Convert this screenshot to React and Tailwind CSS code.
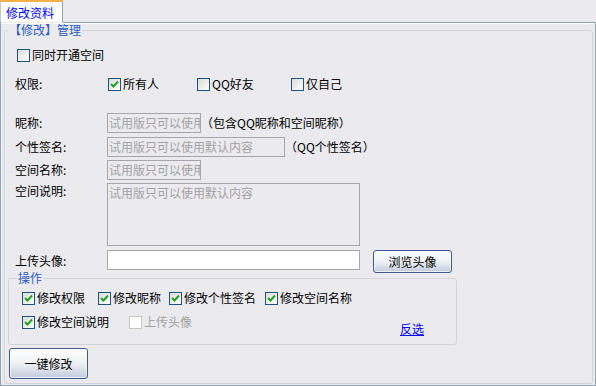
import React from 'react';

const font = { fontFamily: '"Noto Sans CJK SC", "Liberation Sans", sans-serif' };

function Check({ checked, disabled }) {
  if (disabled) {
    return <span className="w-[13px] h-[13px] shrink-0 border border-[#c9c7ba] bg-white" />;
  }
  return (
    <span className="w-[13px] h-[13px] shrink-0 border border-[#1c5180] bg-gradient-to-br from-[#dcdcd7] to-white flex items-center justify-center">
      {checked && (
        <svg width="9" height="9" viewBox="0 0 9 9">
          <path d="M1 4 L3.5 6.5 L8 1.5" fill="none" stroke="#21a121" strokeWidth="2" />
        </svg>
      )}
    </span>
  );
}

function Item({ label, checked, disabled, width }) {
  return (
    <div className="flex items-center gap-[2px] shrink-0" style={{ width }}>
      <Check checked={checked} disabled={disabled} />
      <span className={disabled ? 'text-[#a3a3a3]' : 'text-black'}>{label}</span>
    </div>
  );
}

const box = 'h-[20px] shrink-0 border border-[#a7a6aa] px-[1px] text-[#a3a3a3] overflow-hidden whitespace-nowrap leading-[18px]';

function Btn({ children, className }) {
  return (
    <button className={`border border-[#3c5a8c] rounded-[3px] bg-gradient-to-b from-white via-[#eef0f5] to-[#c2cbdc] text-black text-[12px] shadow-[inset_0_0_0_1px_rgba(255,255,255,0.7)] ${className}`} style={font}>
      {children}
    </button>
  );
}

export default function App() {
  return (
    <div className="w-[596px] h-[386px] bg-[#ebeaef] text-[12px] leading-[14px] flex flex-col" style={font}>
      <div className="flex h-[22px] shrink-0">
        <div className="w-[63px] bg-white border-t-2 border-t-[#f6b04a] border-l border-r border-l-[#c4c8cc] border-r-[#8fa5b0] pl-[5px] pt-[4px] text-[#0000ff]">修改资料</div>
      </div>
      <div className="flex-1 border border-[#8fa5b0] border-t-0 relative">
        <div className="absolute left-[62px] right-[-1px] top-0 h-px bg-[#8fa5b0]" />
        <div className="absolute left-0 right-0 top-px h-px bg-white" />
        <fieldset className="ml-[3px] mr-[2px] mt-px h-[361px] border border-[#d3d2d7] rounded-[3px] pl-[12px] pr-[4px]">
          <legend className="-ml-[9px] px-[1px] text-[#2b5cc2]">【修改】管理</legend>
          <div className="mt-[11px] flex">
            <Item label="同时开通空间" width={100} />
          </div>
          <div className="mt-[15px] flex items-center">
            <div className="w-[93px] -ml-[2px] shrink-0">权限:</div>
            <Item label="所有人" checked width={89} />
            <Item label="QQ好友" width={94} />
            <Item label="仅自己" width={80} />
          </div>
          <div className="mt-[22px] flex items-center">
            <div className="w-[92px] -ml-[2px] shrink-0">昵称:</div>
            <div className={`${box} w-[94px]`}>试用版只可以使用默认内容</div>
            <span className="whitespace-nowrap">（包含QQ昵称和空间昵称）</span>
          </div>
          <div className="mt-[4px] flex items-center">
            <div className="w-[92px] -ml-[2px] shrink-0">个性签名:</div>
            <div className={`${box} w-[178px]`}>试用版只可以使用默认内容</div>
            <span className="whitespace-nowrap">（QQ个性签名）</span>
          </div>
          <div className="mt-[3px] flex items-center">
            <div className="w-[92px] -ml-[2px] shrink-0">空间名称:</div>
            <div className={`${box} w-[94px]`}>试用版只可以使用默认内容</div>
          </div>
          <div className="mt-[3px] flex items-start">
            <div className="w-[92px] -ml-[2px] shrink-0 pt-[1px]">空间说明:</div>
            <div className="h-[63px] w-[253px] border border-[#a7a6aa] px-[1px] pt-[2px] text-[#a3a3a3]">试用版只可以使用默认内容</div>
          </div>
          <div className="mt-[4px] flex items-start">
            <div className="w-[92px] -ml-[2px] shrink-0 pt-[4px]">上传头像:</div>
            <div className="h-[20px] w-[253px] border border-[#a7a6aa] bg-white" />
            <Btn className="ml-[13px] w-[79px] h-[23px]">浏览头像</Btn>
          </div>
          <fieldset className="-ml-[9px] -mt-[2px] w-[449px] h-[74px] border border-[#d3d2d7] rounded-[3px] pl-[13px]">
            <legend className="-ml-[5px] px-[1px] text-[#2b5cc2]">操作</legend>
            <div className="mt-[6px] flex items-center">
              <Item label="修改权限" checked width={76} />
              <Item label="修改昵称" checked width={71} />
              <Item label="修改个性签名" checked width={96} />
              <Item label="修改空间名称" checked width={100} />
            </div>
            <div className="mt-[10px] flex items-start">
              <Item label="修改空间说明" checked width={107} />
              <Item label="上传头像" disabled width={80} />
              <a className="ml-[191px] mt-[7px] text-[#0000ff] underline">反选</a>
            </div>
          </fieldset>
          <Btn className="-ml-[8px] mt-[3px] w-[79px] h-[31px]">一键修改</Btn>
        </fieldset>
      </div>
    </div>
  );
}
